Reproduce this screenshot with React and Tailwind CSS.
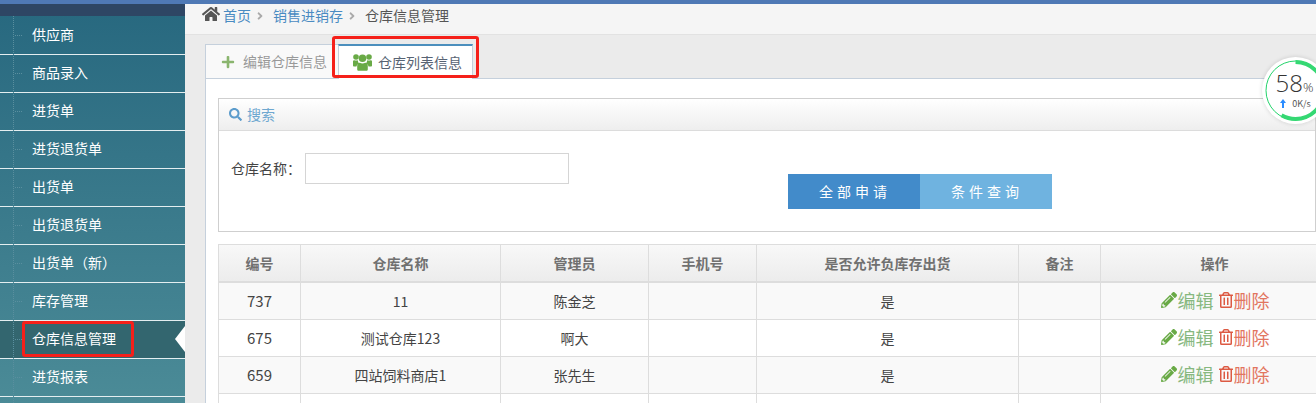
import { FaHome, FaAngleRight, FaPlus, FaSearch, FaPencilAlt, FaRegTrashAlt } from 'react-icons/fa';

const menuItems = ['供应商', '商品录入', '进货单', '进货退货单', '出货单', '出货退货单', '出货单（新）', '库存管理', '仓库信息管理', '进货报表'];

const rows = [
  { id: '737', name: '11', admin: '陈金芝' },
  { id: '675', name: '测试仓库123', admin: '啊大' },
  { id: '659', name: '四站饲料商店1', admin: '张先生' },
  { id: '', name: '', admin: '' },
];

const columns = ['w-[82px]', 'w-[200px]', 'w-[148px]', 'w-[108px]', 'w-[262px]', 'w-[82px]', 'w-[228px]'];
const headers = ['编号', '仓库名称', '管理员', '手机号', '是否允许负库存出货', '备注', '操作'];

function UsersIcon() {
  return (
    <svg className="mr-[6px] shrink-0" width="19" height="17" viewBox="0 0 19 17" fill="#69aa46">
      <circle cx="9.5" cy="4.2" r="3.8" />
      <circle cx="3" cy="3" r="2.8" />
      <circle cx="16" cy="3" r="2.8" />
      <path d="M0 7.6C0 6.6.6 6 1.4 6.2 2.4 6.6 3.6 6.6 4.8 6.2 5 8 5.6 9 6.4 9.6 4.8 10 3.8 11 3.4 12.6H1.2C.5 12.6 0 12.2 0 11.6Z" />
      <path d="M19 7.6C19 6.6 18.4 6 17.6 6.2 16.6 6.6 15.4 6.6 14.2 6.2 14 8 13.4 9 12.6 9.6 14.2 10 15.2 11 15.6 12.6H17.8C18.5 12.6 19 12.2 19 11.6Z" />
      <path d="M4.2 12C4.2 10 5.4 8.8 6.8 8.8 8.4 9.8 10.6 9.8 12.2 8.8 13.6 8.8 14.8 10 14.8 12V15.2C14.8 16.2 14.2 16.8 13.2 16.8H5.8C4.8 16.8 4.2 16.2 4.2 15.2Z" />
    </svg>
  );
}

function Sidebar() {
  return (
    <aside className="relative w-[185px] shrink-0 overflow-hidden bg-gradient-to-b from-[#27687f] to-[#4b8b97]">
      <div className="h-[12px] bg-[#2e4664]" />
      <ul className="pt-px">
        {menuItems.map((item) => {
          const active = item === '仓库信息管理';
          return (
            <li
              key={item}
              className={`relative flex h-[38px] items-center border-b border-[#e4eef0] pb-[2px] pl-[32px] text-[14px] text-white ${active ? 'bg-[#33666f]' : ''}`}
            >
              <span className="absolute left-[15px] top-[18px] w-[7px] border-t border-dotted border-[#5a8f9f]" />
              {item}
              {active && (
                <span className="absolute right-0 top-[5px] h-0 w-0 border-y-[13px] border-r-[10px] border-y-transparent border-r-white" />
              )}
            </li>
          );
        })}
      </ul>
      <span className="absolute bottom-0 left-[13px] top-[12px] border-l border-dotted border-[#5a8f9f]" />
    </aside>
  );
}

function Breadcrumb() {
  return (
    <div className="flex h-[31px] shrink-0 items-start border-b border-[#e2e2e2] bg-[#f5f5f5] pl-[17px] text-[14px] leading-[22px]">
      <FaHome className="mt-[1px] text-[18px] text-[#555]" />
      <span className="ml-[3px] text-[#4a8bc2]">首页</span>
      <FaAngleRight className="ml-[3px] mt-[6px] text-[12px] text-[#aaa]" />
      <span className="ml-[7px] text-[#4a8bc2]">销售进销存</span>
      <FaAngleRight className="ml-[3px] mt-[6px] text-[12px] text-[#aaa]" />
      <span className="ml-[7px] text-[#555]">仓库信息管理</span>
    </div>
  );
}

function Tabs() {
  return (
    <div className="flex h-[35px] items-end border-b border-[#c5d0dc]">
      <div className="flex h-[34px] w-[133px] items-center border-t border-l border-[#c5d0dc] bg-[#f9f9f9] pl-[15px] text-[14px] text-[#999]">
        <FaPlus className="mr-[8px] text-[14px] text-[#8ab56e]" />
        编辑仓库信息
      </div>
      <div className="relative top-px flex h-[35px] w-[135px] items-center border-x border-t-2 border-[#c5d0dc] border-t-[#4c8fbd] bg-white pl-[14px] text-[14px] text-[#576373]">
        <UsersIcon />
        仓库列表信息
      </div>
    </div>
  );
}

function SearchBox() {
  return (
    <section className="h-[134px] border border-[#cfcfcf] bg-white">
      <div className="flex h-[32px] items-center border-b border-[#dcdcdc] bg-gradient-to-b from-white to-[#eeeeee] pl-[10px] text-[14px] text-[#6fa8d0]">
        <FaSearch className="mr-[5px] text-[13px] text-[#5c9ccc]" />
        搜索
      </div>
      <div className="h-[100px]">
        <div className="flex items-center pl-[12px] pt-[22px] text-[14px] text-[#444]">
          <span className="w-[74px]">仓库名称：</span>
          <input className="h-[31px] w-[264px] border border-[#d5d5d5] bg-white outline-none" />
        </div>
        <div className="mt-[-10px] flex pl-[569px] text-[14px] tracking-[4px] text-white">
          <button className="h-[35px] w-[132px] bg-[#428bca] pl-[2px]">全部申请</button>
          <button className="h-[35px] w-[132px] bg-[#6fb3e0] pl-[2px]">条件查询</button>
        </div>
      </div>
    </section>
  );
}

function DataTable() {
  return (
    <div className="mt-[12px] w-[1112px] border-l border-t border-[#dddddd] text-[14px] text-[#444]">
      <div className="flex h-[38px] border-b-2 border-[#dddddd] bg-gradient-to-b from-[#f8f8f8] to-[#ececec] font-bold text-[#707070]">
        {headers.map((h, i) => (
          <div key={h} className={`flex shrink-0 items-center justify-center border-r border-[#dddddd] ${columns[i]}`}>
            {h}
          </div>
        ))}
      </div>
      {rows.map((row, index) => (
        <div key={index} className={`flex h-[37px] border-b border-[#dddddd] ${index % 2 === 0 ? 'bg-[#f9f9f9]' : 'bg-white'}`}>
          <div className={`flex shrink-0 items-center justify-center border-r border-[#dddddd] text-[15px] ${columns[0]}`}>{row.id}</div>
          <div className={`flex shrink-0 items-center justify-center border-r border-[#dddddd] ${columns[1]}`}>{row.name}</div>
          <div className={`flex shrink-0 items-center justify-center border-r border-[#dddddd] ${columns[2]}`}>{row.admin}</div>
          <div className={`shrink-0 border-r border-[#dddddd] ${columns[3]}`} />
          <div className={`flex shrink-0 items-center justify-center border-r border-[#dddddd] ${columns[4]}`}>{row.id && '是'}</div>
          <div className={`shrink-0 border-r border-[#dddddd] ${columns[5]}`} />
          <div className={`flex shrink-0 items-center justify-center pb-[2px] text-[18px] leading-[24px] ${columns[6]}`}>
            {row.id && (
              <>
                <span className="flex items-center text-[#87b87f]">
                  <FaPencilAlt className="mr-px text-[16px] text-[#69aa46]" />
                  编辑
                </span>
                <span className="ml-[4px] flex items-center text-[#e2755f]">
                  <FaRegTrashAlt className="text-[16px] text-[#dd5a43]" />
                  删除
                </span>
              </>
            )}
          </div>
        </div>
      ))}
    </div>
  );
}

function SpeedBall() {
  return (
    <div className="absolute left-[1262px] top-[57px] flex h-[67px] w-[67px] flex-col items-center rounded-full bg-white shadow-[0_0_4px_rgba(0,0,0,0.15)]">
      <svg className="absolute left-[3px] top-[3px]" width="61" height="61" viewBox="0 0 61 61">
        <circle cx="30.5" cy="30.5" r="29.5" fill="none" stroke="#22d36a" strokeWidth="1" />
        <circle cx="30.5" cy="30.5" r="28.5" fill="none" stroke="#35d873" strokeWidth="4" strokeDasharray="104 179" transform="rotate(-90 30.5 30.5)" />
      </svg>
      <div className="relative mt-[12px] flex items-baseline pr-[2px] font-['Open_Sans',sans-serif] font-light text-[#333]">
        <span className="text-[24px] leading-[28px]">58</span>
        <span className="text-[13px]">%</span>
      </div>
      <div className="relative flex items-center text-[9px] leading-[12px] text-[#555]">
        <svg className="mr-[6px]" width="6" height="9" viewBox="0 0 6 9" fill="#2b8cff">
          <path d="M3 0 6 4H4V9H2V4H0Z" />
        </svg>
        0K/s
      </div>
    </div>
  );
}

export default function App() {
  return (
    <div className="relative h-[403px] w-[1316px] overflow-hidden bg-[#ebebeb] font-['Noto_Sans_CJK_SC','Liberation_Sans',sans-serif]">
      <div className="h-[4px] bg-[#4f79b5]" />
      <div className="flex h-[399px]">
        <Sidebar />
        <main className="min-w-0 flex-1">
          <Breadcrumb />
          <div className="pl-[20px] pt-[9px]">
            <Tabs />
            <div className="h-[400px] border-l border-[#c5d0dc] bg-white pl-[12px] pt-[19px]">
              <SearchBox />
              <DataTable />
            </div>
          </div>
        </main>
      </div>
      <SpeedBall />
      <span className="absolute left-[332px] top-[36px] h-[42px] w-[147px] rounded-[3px] border-[3px] border-[#f5201a]" />
      <span className="absolute left-[22px] top-[321px] h-[36px] w-[112px] rounded-[3px] border-[3px] border-[#f5201a]" />
    </div>
  );
}
